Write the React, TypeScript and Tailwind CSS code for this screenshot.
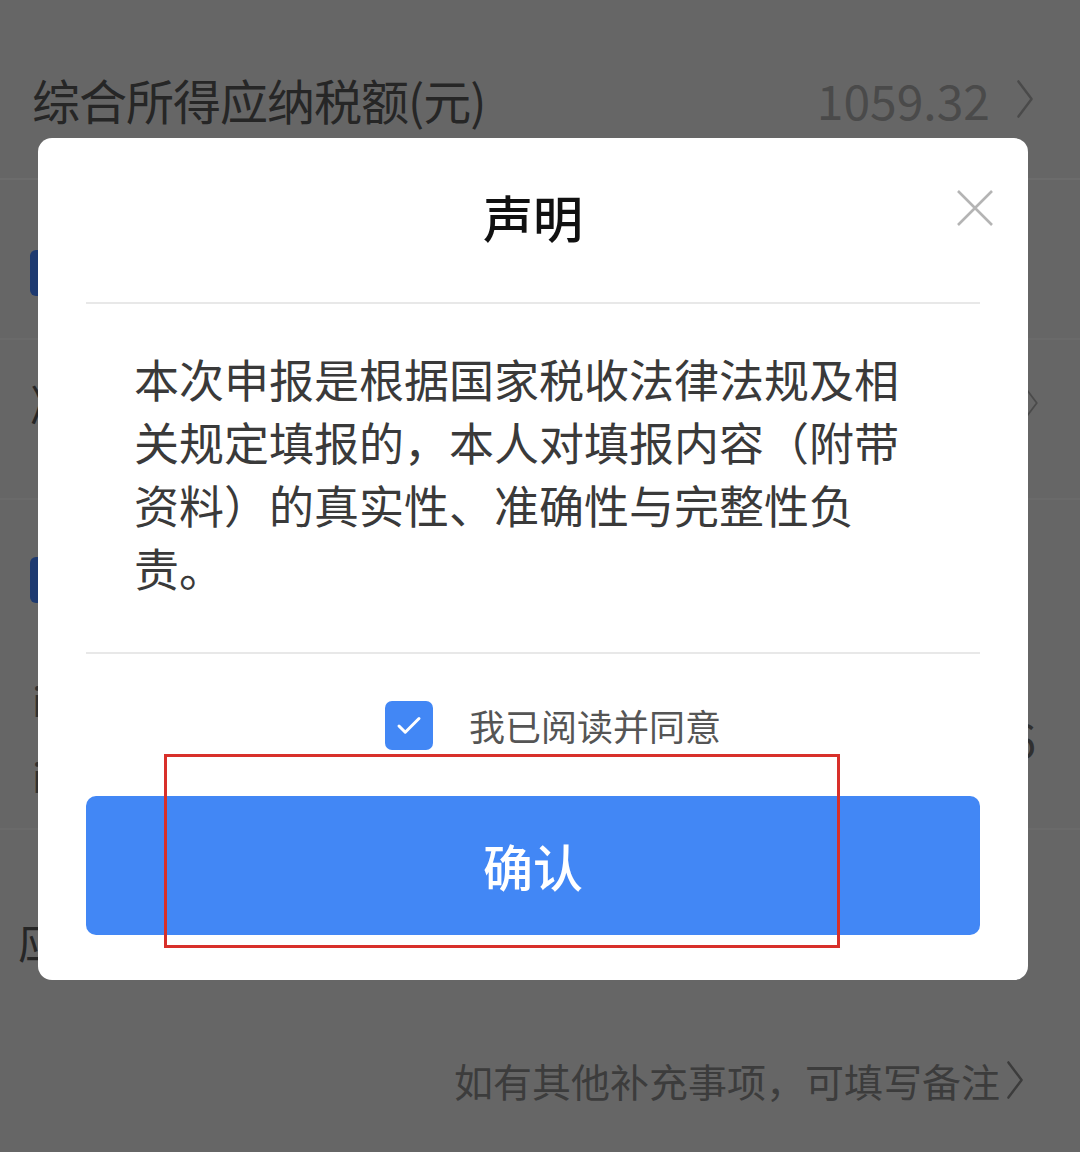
import { Check } from "lucide-react";

const font = { fontFamily: '"Noto Sans CJK SC", "Noto Sans", sans-serif' };

const Chevron = ({ className }: { className: string }) => (
  <svg viewBox="0 0 20 40" className={className} fill="none">
    <path d="M4 4 L16 20 L4 36" stroke="currentColor" strokeWidth={2.2} strokeLinecap="round" strokeLinejoin="round" />
  </svg>
);

export default function App() {
  return (
    <div
      className="relative w-[1080px] h-[1152px] overflow-hidden bg-[#666666]"
      style={font}
    >
      {/* page under the mask */}
      <div className="flex flex-col">
        <div className="h-[180px] flex items-start justify-between pl-[32px] pr-[44px] pt-[66px] border-b-2 border-[#6c6c6c]">
          <span className="text-[48px] leading-[66px] text-[#262626] tracking-[-1px]">
            综合所得应纳税额(元)
          </span>
          <span className="flex items-center gap-[24px] text-[48px] leading-[66px] text-[#4a4a4a]">
            1059.32
            <Chevron className="w-[22px] h-[44px]" />
          </span>
        </div>
        <div className="h-[160px] flex items-start pl-[30px] pt-[70px] border-b-2 border-[#6a6a6a]">
          <div className="w-[40px] h-[46px] rounded-[6px] bg-[#1e3a70]" />
        </div>
        <div className="h-[160px] flex items-start justify-between pl-[30px] pr-[40px] pt-[29px] border-b-2 border-[#6a6a6a]">
          <span className="text-[46px] leading-[66px] text-[#262626]">减</span>
          <Chevron className="w-[16px] h-[32px] mt-[18px] text-[#4a4a4a]" />
        </div>
        <div className="h-[330px] flex flex-col pl-[30px] pr-[44px] pt-[57px] border-b-2 border-[#6a6a6a]">
          <div className="w-[40px] h-[46px] rounded-[6px] bg-[#1e3a70]" />
          <div className="mt-[59px] flex items-center justify-between">
            <div className="flex flex-col pl-[2px] text-[40px] leading-[76px] text-[#303030]">
              <span>il</span>
              <span>il</span>
            </div>
            <span className="text-[46px] leading-[66px] text-[#303030]">6</span>
          </div>
        </div>
        <div className="h-[150px] flex items-start pl-[18px] pt-[77px]">
          <span className="text-[44px] leading-[66px] text-[#262626]">应补退税额</span>
        </div>
        <div className="h-[172px] flex items-start justify-end pr-[54px] pt-[72px]">
          <span className="text-[39px] leading-[56px] text-[#3c3c3c]">如有其他补充事项，可填写备注</span>
          <Chevron className="w-[22px] h-[44px] mt-[6px] ml-[4px] text-[#3c3c3c]" />
        </div>
      </div>

      {/* dialog */}
      <div className="absolute left-[38px] top-[138px] w-[990px] h-[842px] bg-white rounded-[14px] flex flex-col">
        <div className="h-[164px] flex justify-center pt-[45px]">
          <span className="text-[50px] leading-[66px] text-[#111111] font-medium">声明</span>
        </div>
        <button className="absolute left-[919px] top-[52px] text-[#b4b4b4]">
          <svg viewBox="0 0 36 36" className="w-[36px] h-[36px]" fill="none">
            <path d="M1 1 L35 35 M35 1 L1 35" stroke="currentColor" strokeWidth={2.6} />
          </svg>
        </button>
        <div className="mx-[48px] h-[2px] bg-[#e8e8e8]" />
        <div className="pl-[96px] pt-[43px] pb-[53px]">
          <p className="w-[790px] text-[45px] leading-[63px] text-[#3a3a3a]">
            本次申报是根据国家税收法律法规及相关规定填报的，本人对填报内容（附带资料）的真实性、准确性与完整性负责。
          </p>
        </div>
        <div className="mx-[48px] h-[2px] bg-[#e8e8e8]" />
        <div className="flex items-center pl-[347px] pt-[47px]">
          <div className="w-[48px] h-[49px] rounded-[7px] bg-[#4287f5] flex items-center justify-center">
            <Check className="w-[30px] h-[30px] text-white" strokeWidth={2.4} />
          </div>
          <span className="ml-[36px] text-[36px] leading-[49px] text-[#555555]">我已阅读并同意</span>
        </div>
        <button className="mx-[48px] mt-[46px] h-[139px] rounded-[10px] bg-[#4287f5] flex items-center justify-center">
          <span className="text-[50px] text-white font-medium">确认</span>
        </button>
      </div>

      {/* red annotation frame */}
      <div className="absolute left-[164px] top-[754px] w-[676px] h-[194px] border-[3px] border-[#d8302a]" />
    </div>
  );
}
